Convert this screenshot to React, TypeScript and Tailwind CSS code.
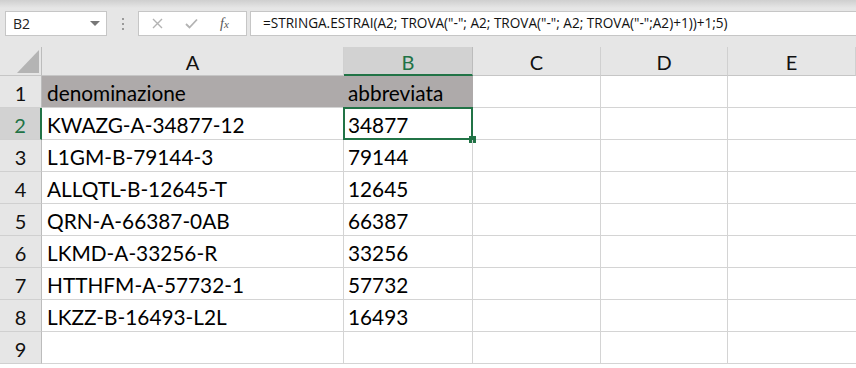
import React from "react";

const rows = [
  ["denominazione", "abbreviata"],
  ["KWAZG-A-34877-12", "34877"],
  ["L1GM-B-79144-3", "79144"],
  ["ALLQTL-B-12645-T", "12645"],
  ["QRN-A-66387-0AB", "66387"],
  ["LKMD-A-33256-R", "33256"],
  ["HTTHFM-A-57732-1", "57732"],
  ["LKZZ-B-16493-L2L", "16493"],
  ["", ""],
];

const cols = ["A", "B", "C", "D", "E"];
const widths = ["w-[302px]", "w-[129px]", "w-[128px]", "w-[127px]", "flex-1"];

function FormulaBar() {
  return (
    <div className="h-[47px] bg-[#e6e6e6] relative">
      <div className="absolute inset-x-0 top-0 h-[8px] bg-gradient-to-b from-[#cfcfcf] to-[#e6e6e6]" />
      <div className="relative flex items-start pt-[11px]">
        {/* name box */}
        <div className="ml-[5px] w-[102px] h-[25px] bg-white border border-[#c6c6c6] flex items-center justify-between pl-[7px] pr-[6px]">
          <span className="text-[14px] text-[#222]">B2</span>
          <svg width="10" height="6" viewBox="0 0 10 6">
            <path d="M0 0 L10 0 L5 5 Z" fill="#777" />
          </svg>
        </div>
        <div className="w-[31px] h-[25px] flex flex-col items-center justify-center gap-[3px]">
          <span className="w-[2px] h-[2px] bg-[#9a9a9a]" />
          <span className="w-[2px] h-[2px] bg-[#9a9a9a]" />
          <span className="w-[2px] h-[2px] bg-[#9a9a9a]" />
        </div>
        {/* cancel / enter / fx */}
        <div className="w-[109px] h-[25px] bg-white border border-[#c6c6c6] flex items-center">
          <svg className="ml-[13px]" width="11" height="11" viewBox="0 0 11 11">
            <path d="M1 1 L10 10 M10 1 L1 10" stroke="#b3b3b3" strokeWidth="1.4" />
          </svg>
          <svg className="ml-[22px]" width="13" height="11" viewBox="0 0 13 11">
            <path d="M1 6 L4.5 9.5 L12 1.5" stroke="#b3b3b3" strokeWidth="1.8" fill="none" />
          </svg>
          <span className="ml-[22px] text-[14px] italic text-[#555] font-['Liberation_Serif',serif] leading-none">
            f<span className="text-[11px]">x</span>
          </span>
        </div>
        <div className="ml-[3px] flex-1 h-[25px] bg-white border-y border-l border-[#c6c6c6] flex items-center pl-[12px]">
          <span className="text-[13.6px] text-[#111] whitespace-pre">
            =STRINGA.ESTRAI(A2; TROVA("-"; A2; TROVA("-"; A2; TROVA("-";A2)+1))+1;5)
          </span>
        </div>
      </div>
    </div>
  );
}

export default function App() {
  return (
    <div className="w-[856px] h-[368px] overflow-hidden bg-white font-['Open_Sans',sans-serif]">
      <FormulaBar />

      {/* column headers */}
      <div className="flex h-[29px] bg-[#e6e6e6] font-['Lato',sans-serif]">
        <div className="w-[42px] border-r border-[#bcbcbc] border-b border-b-[#c6c6c6] relative">
          <svg className="absolute left-[17px] top-[3px]" width="22" height="23" viewBox="0 0 22 23">
            <path d="M22 0 L22 23 L0 23 Z" fill="#b4b4b4" />
          </svg>
        </div>
        {cols.map((c, i) => (
          <div
            key={c}
            className={`${widths[i]} flex items-center justify-center pt-[2px] text-[20px] ${
              c === "B"
                ? "bg-[#d2d2d2] text-[#217346] border-b-2 border-b-[#217346] border-r border-r-[#bcbcbc]"
                : "text-[#111] border-b border-b-[#c6c6c6] border-r border-r-[#d0d0d0]"
            }`}
          >
            {c}
          </div>
        ))}
      </div>

      {rows.map((r, ri) => {
        const n = ri + 1;
        return (
          <div key={n} className="flex h-[32px] font-['Lato',sans-serif] text-[20.8px] leading-[28px] text-black">
            <div
              className={`w-[42px] flex items-center justify-center pt-[3px] text-[20px] border-b border-b-[#d0d0d0] ${
                n === 2
                  ? "bg-[#d2d2d2] text-[#217346] border-r-2 border-r-[#217346]"
                  : "bg-[#e6e6e6] text-[#111] border-r border-r-[#bcbcbc]"
              }`}
            >
              {n}
            </div>
            <div
              className={`w-[302px] flex items-end pl-[5px] ${
                n === 1 ? "bg-[#aeaaaa] border-b border-b-[#d4d4d4]" : "border-r border-b border-[#d4d4d4]"
              }`}
            >
              {r[0]}
            </div>
            <div
              className={`w-[129px] flex items-end pl-[4px] relative ${
                n === 1 ? "bg-[#aeaaaa] border-b border-b-[#d4d4d4]" : "border-r border-b border-[#d4d4d4]"
              }`}
            >
              {r[1]}
              {n === 2 && (
                <>
                  <div className="absolute -left-[1px] -top-[1px] -right-[1px] -bottom-[1px] border-2 border-[#217346]" />
                  <div className="absolute -right-[4px] -bottom-[4px] w-[7px] h-[7px] bg-[#217346]" />
                </>
              )}
            </div>
            <div className="w-[128px] border-r border-b border-[#d4d4d4]" />
            <div className="w-[127px] border-r border-b border-[#d4d4d4]" />
            <div className="flex-1 border-b border-[#d4d4d4]" />
          </div>
        );
      })}
    </div>
  );
}
